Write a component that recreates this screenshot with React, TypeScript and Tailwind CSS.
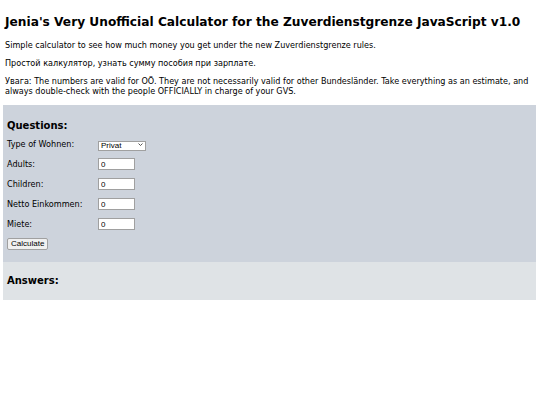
import { useState } from "react";

const sans = { fontFamily: '"DejaVu Sans", sans-serif' };

function Row({ label, children }: { label: string; children: React.ReactNode }) {
  return (
    <div className="flex h-[20px] items-center">
      <span className="w-[91px] shrink-0">{label}</span>
      {children}
    </div>
  );
}

export default function App() {
  const [wohnen, setWohnen] = useState("Privat");
  const [adults, setAdults] = useState("0");
  const [children, setChildren] = useState("0");
  const [income, setIncome] = useState("0");
  const [rent, setRent] = useState("0");

  const inputCls =
    "h-[12px] w-[37px] border border-[#a0a0a0] bg-white px-[2px] font-['Liberation_Sans',Arial,sans-serif] text-[8px] leading-none text-black outline-none";

  return (
    <div className="min-h-[405px] bg-white px-[3px] text-black" style={sans}>
      <h1 className="px-[2px] pt-[14px] text-[12.2px] font-bold leading-[16px]">
        Jenia's Very Unofficial Calculator for the Zuverdienstgrenze JavaScript v1.0
      </h1>
      <div className="px-[2px] text-[8.1px] leading-[10px]">
        <p className="mt-[10px]">
          Simple calculator to see how much money you get under the new Zuverdienstgrenze rules.
        </p>
        <p className="mt-[8px]">Простой калкулятор, узнать сумму пособия при зарплате.</p>
        <p className="mt-[8px]">
          Увага: The numbers are valid for OÖ. They are not necessarily valid for other Bundesländer. Take
          everything as an estimate, and always double-check with the people OFFICIALLY in charge of your GVS.
        </p>
      </div>

      <section className="mt-[9px] w-[533px] bg-[#cdd3dc] px-[4px] pb-[8px] pt-[15px] text-[8.1px]">
        <h2 className="mb-[2px] text-[10px] font-bold leading-[12px]">Questions:</h2>
        <Row label="Type of Wohnen:">
          <div className="relative h-[10px] w-[48px]">
            <select
              value={wohnen}
              onChange={(e) => setWohnen(e.target.value)}
              className="h-full w-full appearance-none border border-[#a0a0a0] bg-white pl-[2px] font-['Liberation_Sans',Arial,sans-serif] text-[8px] leading-none outline-none"
            >
              <option>Privat</option>
              <option>Gemeinde</option>
              <option>Genossenschaft</option>
            </select>
            <svg
              className="pointer-events-none absolute right-[3px] top-[4px] h-[3px] w-[5px]"
              viewBox="0 0 5 3"
              fill="none"
            >
              <path d="M0.5 0.5 L2.5 2.5 L4.5 0.5" stroke="#444" strokeWidth="0.9" />
            </svg>
          </div>
        </Row>
        <Row label="Adults:">
          <input className={inputCls} value={adults} onChange={(e) => setAdults(e.target.value)} />
        </Row>
        <Row label="Children:">
          <input className={inputCls} value={children} onChange={(e) => setChildren(e.target.value)} />
        </Row>
        <Row label="Netto Einkommen:">
          <input className={inputCls} value={income} onChange={(e) => setIncome(e.target.value)} />
        </Row>
        <Row label="Miete:">
          <input className={inputCls} value={rent} onChange={(e) => setRent(e.target.value)} />
        </Row>
        <div className="flex h-[20px] items-center">
          <button className="h-[12px] rounded-[2px] border border-[#a0a0a0] bg-[#f0f0f0] px-[3px] font-['Liberation_Sans',Arial,sans-serif] text-[8px] leading-none">
            Calculate
          </button>
        </div>
      </section>

      <section className="w-[533px] bg-[#dfe3e6] px-[4px] py-[13px]">
        <h2 className="text-[10px] font-bold leading-[12px]">Answers:</h2>
      </section>
    </div>
  );
}
